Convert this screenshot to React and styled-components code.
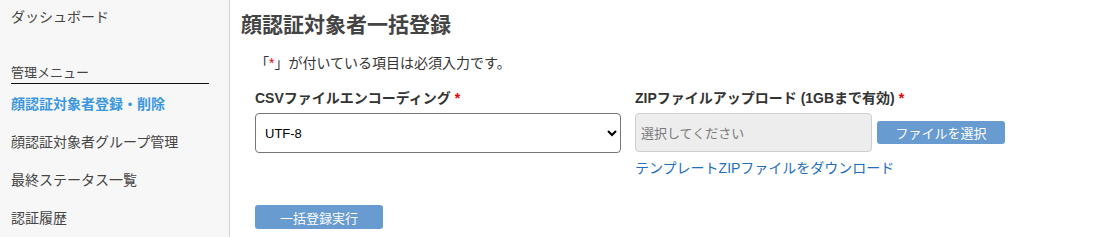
import React, { useState } from 'react';
import styled, { createGlobalStyle } from 'styled-components';

const GlobalStyle = createGlobalStyle`
  html, body {
    margin: 0;
    padding: 0;
    background: #fff;
  }
  body {
    font-family: "Liberation Sans", "Noto Sans CJK JP", sans-serif;
    color: #333;
  }
`;

const Layout = styled.div`
  display: flex;
  min-height: 237px;
`;

const Sidebar = styled.nav`
  width: 230px;
  flex-shrink: 0;
  background: #f7f7f7;
  border-right: 1px solid #d2d2d2;
  padding: 7px 20px 0 11px;
  box-sizing: border-box;
`;

const NavItem = styled.div`
  font-size: 14px;
  line-height: 20px;
  padding: ${p => (p.$top ? '0' : '9px 0')};
  color: ${p => (p.$active ? '#3a97e0' : '#444')};
  font-weight: ${p => (p.$active ? 'bold' : 'normal')};
  cursor: pointer;
`;

const MenuHeading = styled.div`
  margin-top: 36px;
  font-size: 13px;
  line-height: 20px;
  color: #444;
  border-bottom: 1px solid #111;
  margin-bottom: 1px;
`;

const Main = styled.main`
  flex: 1;
  padding: 11px 0 0 11px;
`;

const Title = styled.h1`
  margin: 0;
  font-size: 21px;
  line-height: 28px;
  font-weight: bold;
  color: #444;
`;

const Form = styled.div`
  padding-left: 14px;
`;

const Note = styled.p`
  margin: 14px 0 0;
  font-size: 14px;
  line-height: 20px;
  color: #333;
`;

const Req = styled.span`
  color: #e60000;
`;

const Row = styled.div`
  display: flex;
  gap: 14px;
  margin-top: 15px;
`;

const Field = styled.div`
  width: ${p => p.$w};
`;

const Label = styled.div`
  font-size: 14px;
  line-height: 20px;
  font-weight: bold;
  color: #333;
  margin-bottom: 5px;
  white-space: nowrap;
`;

const Select = styled.select`
  width: 100%;
  height: 40px;
  font-family: "Liberation Sans", "Noto Sans CJK JP", sans-serif;
  font-size: 13px;
  color: #000;
  padding: 0 5px;
  border: 1px solid #767676;
  border-radius: 4px;
  background: #fff;
`;

const UploadRow = styled.div`
  display: flex;
  align-items: center;
  gap: 5px;
`;

const FileBox = styled.div`
  width: 237px;
  height: 39px;
  box-sizing: border-box;
  background: #ededed;
  border: 1px solid #cfcfcf;
  border-radius: 4px;
  display: flex;
  align-items: center;
  padding-left: 5px;
  font-size: 13px;
  color: #7a7a7a;
`;

const BlueButton = styled.button`
  width: 128px;
  height: ${p => p.$h || '23px'};
  border: none;
  border-radius: 3px;
  background: #689bcf;
  color: #fff;
  font-family: "Liberation Sans", "Noto Sans CJK JP", sans-serif;
  font-size: 13px;
  cursor: pointer;
  padding: 0;
`;

const Link = styled.a`
  display: block;
  margin-top: 6px;
  font-size: 14px;
  line-height: 20px;
  color: #1f6fbd;
  text-decoration: none;
  white-space: nowrap;
`;

const Footer = styled.div`
  margin-top: 27px;
`;

const menu = [
  '顔認証対象者登録・削除',
  '顔認証対象者グループ管理',
  '最終ステータス一覧',
  '認証履歴',
];

const App = () => {
  const [encoding, setEncoding] = useState('UTF-8');

  return (
    <Layout>
      <GlobalStyle />
      <Sidebar>
        <NavItem $top>ダッシュボード</NavItem>
        <MenuHeading>管理メニュー</MenuHeading>
        {menu.map((m, i) => (
          <NavItem key={m} $active={i === 0}>{m}</NavItem>
        ))}
      </Sidebar>
      <Main>
        <Title>顔認証対象者一括登録</Title>
        <Form>
          <Note>「<Req>*</Req>」が付いている項目は必須入力です。</Note>
          <Row>
            <Field $w="366px">
              <Label>CSVファイルエンコーディング <Req>*</Req></Label>
              <Select value={encoding} onChange={e => setEncoding(e.target.value)}>
                <option>UTF-8</option>
                <option>Shift_JIS</option>
              </Select>
            </Field>
            <Field $w="380px">
              <Label>ZIPファイルアップロード (1GBまで有効) <Req>*</Req></Label>
              <UploadRow>
                <FileBox>選択してください</FileBox>
                <BlueButton>ファイルを選択</BlueButton>
              </UploadRow>
              <Link href="#">テンプレートZIPファイルをダウンロード</Link>
            </Field>
          </Row>
          <Footer>
            <BlueButton $h="24px">一括登録実行</BlueButton>
          </Footer>
        </Form>
      </Main>
    </Layout>
  );
};

export default App;
